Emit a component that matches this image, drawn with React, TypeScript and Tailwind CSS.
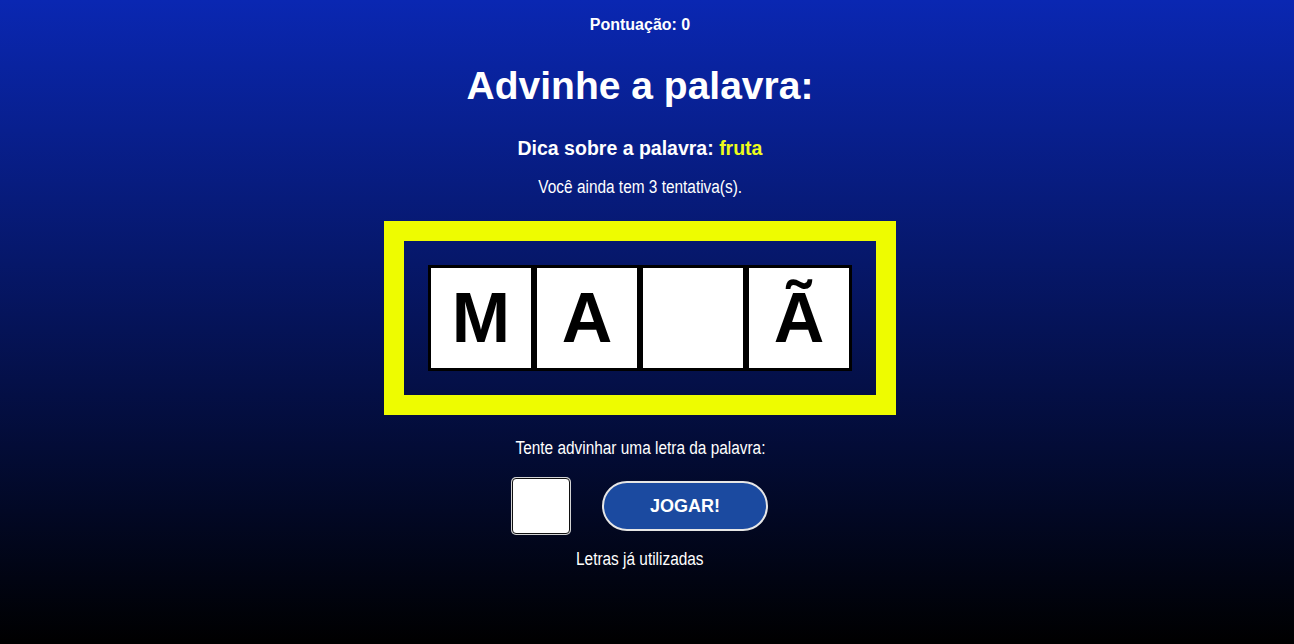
import React, { useState } from "react";

const word = ["M", "A", "", "Ã"];

// narrow, light-looking caption text from the reference
const Caption: React.FC<{ children: React.ReactNode; className?: string }> = ({
  children,
  className = "",
}) => (
  <p className={`text-[18.8px] leading-[24px] ${className}`}>
    <span className="inline-block scale-x-[0.82] whitespace-nowrap">
      {children}
    </span>
  </p>
);

const App: React.FC = () => {
  const [guess, setGuess] = useState("");

  return (
    <div className="h-[644px] w-full bg-[linear-gradient(to_bottom,#0a27b2,#000000)] font-['Liberation_Sans',Arial,sans-serif] text-white">
      <div className="flex w-[1280px] flex-col items-center text-center">
        {/* Score */}
        <p className="mt-[15px] text-[16px] font-bold leading-[20px]">
          Pontuação: 0
        </p>

        <h1 className="mt-[27px] text-[39px] font-bold leading-[48px]">
          Advinhe a palavra:
        </h1>

        <h3 className="mt-[26px] text-[19.5px] font-bold leading-[24px]">
          Dica sobre a palavra: <span className="text-[#eefc1a]">fruta</span>
        </h3>

        <Caption className="mt-[15px]">Você ainda tem 3 tentativa(s).</Caption>

        {/* Word board */}
        <div className="mt-[22px] border-[20px] border-[#eefc00] p-[24px]">
          <div className="flex">
            {word.map((letter, i) => (
              <div
                key={i}
                className="flex h-[106px] w-[106px] items-center justify-center border-[3px] border-black bg-white text-[70px] font-bold leading-none text-black"
              >
                {letter}
              </div>
            ))}
          </div>
        </div>

        <Caption className="mt-[21px]">Tente advinhar uma letra da palavra:</Caption>

        <div className="mt-[18px] flex items-center gap-[32px]">
          <input
            value={guess}
            maxLength={1}
            onChange={(e) => setGuess(e.target.value)}
            className="h-[56px] w-[58px] rounded-[4px] border border-[#111] bg-white text-center text-[32px] text-black shadow-[0_0_0_1px_#d4d4d4] outline-none"
          />
          <button className="h-[50px] w-[166px] rounded-full border-2 border-[#e6e6e6] bg-[#1b4aa0] text-[18px] font-bold text-white">
            JOGAR!
          </button>
        </div>

        <Caption className="mt-[13px]">Letras já utilizadas</Caption>
      </div>
    </div>
  );
};

export default App;
